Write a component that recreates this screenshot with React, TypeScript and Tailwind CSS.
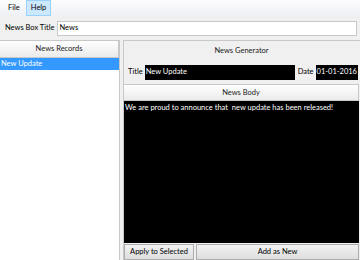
import React from 'react';

const font = { fontFamily: 'Lato, "Noto Sans", sans-serif' };

const HeaderBar: React.FC<{ label: string; className?: string }> = ({ label, className }) => (
  <div
    className={`flex items-center justify-center bg-gradient-to-b from-[#ffffff] to-[#ebebeb] border border-[#c8c8c8] text-[#222] ${className ?? ''}`}
  >
    {label}
  </div>
);

const App: React.FC = () => {
  return (
    <div style={font} className="w-[360px] h-[260px] bg-[#f0f0f0] flex flex-col overflow-hidden text-[7.5px] text-black">
      <div className="h-[16px] flex items-center gap-[1px] pl-[3px] bg-gradient-to-b from-[#fcfcfd] to-[#eef0f4]">
        <span className="px-[4px] py-[1px] border border-transparent">File</span>
        <span className="px-[4px] py-[1px] bg-[#cce8ff] border border-[#99d1ff]">Help</span>
      </div>

      <div className="h-[24px] flex items-center gap-[2px] pl-[5px] pr-[3px]">
        <span className="whitespace-nowrap">News Box Title</span>
        <div className="flex-1 h-[15px] bg-white border border-[#c5c8cc] flex items-center px-[2px]">News</div>
      </div>

      <div className="flex-1 flex gap-[3px] min-h-0">
        <div className="w-[120px] shrink-0 bg-white border-r border-t border-[#c8c8c8] flex flex-col">
          <HeaderBar label="News Records" className="h-[17px] border-t-0 border-l-0" />
          <div className="h-[12px] bg-[#3399ff] text-white flex items-center pl-[1px]">New Update</div>
        </div>

        <div className="flex-1 min-w-0 flex flex-col border-l border-t border-[#c8c8c8] pr-[1px]">
          <div className="h-[19px] flex items-center justify-center text-[#222]">News Generator</div>
          <div className="h-[24px] flex items-center pl-[4px] whitespace-nowrap">
            <span className="mr-[2px]">Title</span>
            <div className="w-[150px] h-[15px] bg-black text-white flex items-center pl-[1px]">New Update</div>
            <span className="ml-[3px] mr-[2px]">Date</span>
            <div className="w-[42px] h-[15px] bg-black text-white flex items-center pl-[1px]">01-01-2016</div>
          </div>
          <HeaderBar label="News Body" className="h-[17px] border-l-0" />
          <div className="flex-1 bg-black text-white px-[1px] pt-[1px] leading-[12px] whitespace-pre">
            {'We are proud to announce that  new update has been released!'}
          </div>
          <div className="h-[17px] flex gap-[2px] pt-[1px]">
            <button className="w-[70px] bg-gradient-to-b from-[#f2f2f2] to-[#dedede] border border-[#adadad] whitespace-nowrap">Apply to Selected</button>
            <button className="flex-1 bg-gradient-to-b from-[#f2f2f2] to-[#dedede] border border-[#adadad]">Add as New</button>
          </div>
        </div>
      </div>
    </div>
  );
};

export default App;
